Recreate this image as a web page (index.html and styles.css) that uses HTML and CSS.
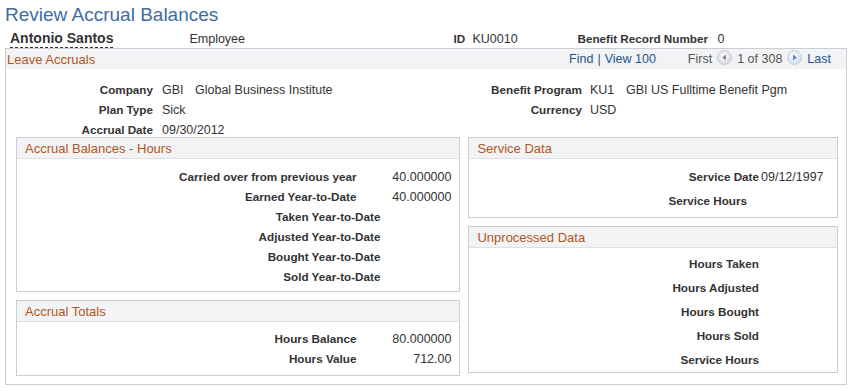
FILE: index.html
```html
<!DOCTYPE html>
<html lang="en">
<head>
    <meta charset="UTF-8">
    <title>Review Accrual Balances</title>
    <link rel="stylesheet" href="styles.css">
</head>
<body>
    <h1 class="page-title">Review Accrual Balances</h1>

    <!-- employee line -->
    <div class="emp">
        <span class="emp-name">Antonio Santos</span>
        <span class="emp-type">Employee</span>
        <span class="emp-lbl emp-id">ID</span>
        <span class="emp-idval">KU0010</span>
        <span class="emp-lbl emp-rec">Benefit Record Number</span>
        <span class="emp-recval">0</span>
    </div>

    <div class="grid-box">
        <div class="grid-head">
            <span class="grid-title">Leave Accruals</span>
            <div class="grid-nav">
                <a class="link">Find</a>
                <span class="sep">|</span>
                <a class="link">View 100</a>
                <span class="first">First</span>
                <svg class="nav-ico" width="15" height="15" viewBox="0 0 15 15">
                    <defs>
                        <radialGradient id="g1" cx="45%" cy="40%" r="60%">
                            <stop offset="0" stop-color="#ffffff"/>
                            <stop offset="1" stop-color="#d3d6da"/>
                        </radialGradient>
                    </defs>
                    <circle cx="7.5" cy="7.5" r="7" fill="url(#g1)" stroke="#c9ccd0"/>
                    <path d="M5 7.5 L9 4.5 L9 10.5 Z" fill="#8a8d91"/>
                </svg>
                <span class="count">1 of 308</span>
                <svg class="nav-ico" width="15" height="15" viewBox="0 0 15 15">
                    <defs>
                        <radialGradient id="g2" cx="45%" cy="40%" r="60%">
                            <stop offset="0" stop-color="#ffffff"/>
                            <stop offset="1" stop-color="#cfdbe8"/>
                        </radialGradient>
                    </defs>
                    <circle cx="7.5" cy="7.5" r="7" fill="url(#g2)" stroke="#c4d0dd"/>
                    <path d="M10 7.5 L6 4.5 L6 10.5 Z" fill="#5d86b8"/>
                </svg>
                <a class="link">Last</a>
            </div>
        </div>

        <div class="fields">
            <div class="fgrid fgrid-left">
                <span class="lbl">Company</span>
                <span class="val"><span class="code">GBI</span>Global Business Institute</span>
                <span class="lbl">Plan Type</span>
                <span class="val">Sick</span>
                <span class="lbl">Accrual Date</span>
                <span class="val">09/30/2012</span>
            </div>
            <div class="fgrid fgrid-right">
                <span class="lbl">Benefit Program</span>
                <span class="val"><span class="code code-wide">KU1</span>GBI US Fulltime Benefit Pgm</span>
                <span class="lbl">Currency</span>
                <span class="val">USD</span>
            </div>
        </div>

        <div class="cols">
            <div class="col">
                <div class="box box-bal">
                    <div class="box-head">Accrual Balances - Hours</div>
                    <div class="box-body">
                        <div class="row"><span class="lbl">Carried over from previous year</span><span class="val">40.000000</span></div>
                        <div class="row"><span class="lbl">Earned Year-to-Date</span><span class="val">40.000000</span></div>
                        <div class="row row-empty"><span class="lbl">Taken Year-to-Date</span><span class="val"></span></div>
                        <div class="row row-empty"><span class="lbl">Adjusted Year-to-Date</span><span class="val"></span></div>
                        <div class="row row-empty"><span class="lbl">Bought Year-to-Date</span><span class="val"></span></div>
                        <div class="row row-empty"><span class="lbl">Sold Year-to-Date</span><span class="val"></span></div>
                    </div>
                </div>
                <div class="box box-tot">
                    <div class="box-head">Accrual Totals</div>
                    <div class="box-body">
                        <div class="row"><span class="lbl">Hours Balance</span><span class="val">80.000000</span></div>
                        <div class="row"><span class="lbl">Hours Value</span><span class="val">712.00</span></div>
                    </div>
                </div>
            </div>

            <div class="col col-right">
                <div class="box box-svc">
                    <div class="box-head">Service Data</div>
                    <div class="box-body">
                        <div class="row"><span class="lbl">Service Date</span><span class="val">09/12/1997</span></div>
                        <div class="row"><span class="lbl lbl-short">Service Hours</span><span class="val"></span></div>
                    </div>
                </div>
                <div class="box box-unp">
                    <div class="box-head">Unprocessed Data</div>
                    <div class="box-body">
                        <div class="row"><span class="lbl">Hours Taken</span><span class="val"></span></div>
                        <div class="row"><span class="lbl">Hours Adjusted</span><span class="val"></span></div>
                        <div class="row"><span class="lbl">Hours Bought</span><span class="val"></span></div>
                        <div class="row"><span class="lbl">Hours Sold</span><span class="val"></span></div>
                        <div class="row"><span class="lbl">Service Hours</span><span class="val"></span></div>
                    </div>
                </div>
            </div>
        </div>
    </div>
</body>
</html>
```

FILE: styles.css
```css
/* base */
body{
    margin: 0;
    font-family: "Liberation Sans", Arial, sans-serif;
    font-size: 12.5px;
    color: #333;
    background: #fff;
}

/* page title */
.page-title{
    margin: 4px 0 0 5px;
    font-size: 19px;
    line-height: 22px;
    font-weight: normal;
    color: #426ba3;
}

/* employee line */
.emp{
    display: flex;
    align-items: baseline;
    height: 18px;
    margin-top: 3px;
    padding-left: 10px;
    line-height: 18px;
}
.emp-name{
    margin-right: 76px;
    font-size: 14px;
    font-weight: bold;
    border-bottom: 1px dashed #333;
    line-height: 18px;
}
.emp-type{
    width: 264px;
}
.emp-lbl{
    font-size: 11.7px;
    font-weight: bold;
}
.emp-id{
    width: 19px;
}
.emp-idval{
    width: 105px;
}
.emp-rec{
    width: 140px;
}

/* outer grid box */
.grid-box{
    margin: 1px 4px 0 5px;
    border: 1px solid #cbcfd5;
    padding-bottom: 8px;
}
.grid-head{
    display: flex;
    justify-content: space-between;
    align-items: center;
    height: 20px;
    background: #f1f3f4;
}
.grid-title{
    padding-left: 1px;
    font-size: 13px;
    color: #b3561d;
}
.grid-nav{
    display: flex;
    align-items: center;
    margin-right: 15px;
    font-size: 12.5px;
}
.link{
    color: #24538f;
}
.sep{
    margin: 0 4px;
    color: #24538f;
}
.first{
    margin-left: 32px;
    color: #555;
}
.count{
    color: #555;
}
.nav-ico{
    margin: -4px 5px 0;
}

/* top fields */
.fields{
    display: grid;
    grid-template-columns: 449px 1fr;
    padding-top: 14px;
}
.fgrid{
    display: grid;
    row-gap: 6px;
    column-gap: 9px;
    line-height: 14px;
}
.fgrid-left{
    grid-template-columns: 147px auto;
}
.fgrid-right{
    grid-template-columns: 127px auto;
    column-gap: 8px;
    align-content: start;
}
.lbl{
    font-size: 11.7px;
    font-weight: bold;
    text-align: right;
}
.code{
    display: inline-block;
    width: 33px;
}
.code-wide{
    width: 36px;
}

/* lower columns */
.cols{
    display: flex;
    gap: 8px;
    padding: 0 8px 0 10px;
}
.col{
    display: flex;
    flex-direction: column;
    gap: 8px;
    width: 445px;
}
.col-right{
    width: 370px;
}
.box{
    border: 1px solid #c9ced4;
}
.box-head{
    height: 20px;
    padding-left: 8px;
    line-height: 21px;
    font-size: 13px;
    color: #b3561d;
    background: #f1f3f4;
    border-bottom: 1px solid #dde1e4;
}
.box-body{
    padding-right: 8px;
}
.row{
    display: grid;
    grid-template-columns: 1fr 95px;
    line-height: 20px;
}
.row .val{
    text-align: right;
}
.row-empty{
    grid-template-columns: 1fr 71px;
}

.box-bal .box-body{
    padding-top: 8px;
    padding-bottom: 4px;
}
.box-tot .box-body{
    padding-top: 7px;
    padding-bottom: 6px;
}

/* right column boxes */
.col-right .box-body{
    padding-right: 0;
}
.col-right .row{
    grid-template-columns: 1fr 76px;
    line-height: 24px;
}
.col-right .row .lbl{
    padding-right: 2px;
}
.col-right .row .val{
    text-align: left;
}
.col-right .row .lbl-short{
    padding-right: 14px;
}
.box-svc .box-body{
    padding-top: 6px;
    padding-bottom: 4px;
}
.box-unp .box-body{
    padding-top: 4px;
}
```
